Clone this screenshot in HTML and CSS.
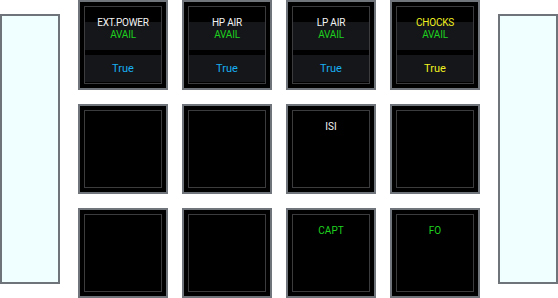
FILE: index.html
```html
<!DOCTYPE html>
<html lang="en">
<head>
    <meta charset="UTF-8">
    <meta name="viewport" content="width=device-width, initial-scale=1.0">
    <title>Ground Services</title>
    <link rel="stylesheet" href="styles.css">
</head>
<body>
    <div class="layout">
        <div class="side-panel"></div>

        <div class="button-grid">
            <div class="svc-btn">
                <div class="svc-inner">
                    <div class="svc-head">
                        <div class="label">EXT.POWER</div>
                        <div class="state">AVAIL</div>
                    </div>
                    <div class="svc-value">True</div>
                </div>
            </div>
            <div class="svc-btn">
                <div class="svc-inner">
                    <div class="svc-head">
                        <div class="label">HP AIR</div>
                        <div class="state">AVAIL</div>
                    </div>
                    <div class="svc-value">True</div>
                </div>
            </div>
            <div class="svc-btn">
                <div class="svc-inner">
                    <div class="svc-head">
                        <div class="label">LP AIR</div>
                        <div class="state">AVAIL</div>
                    </div>
                    <div class="svc-value">True</div>
                </div>
            </div>
            <div class="svc-btn warn">
                <div class="svc-inner">
                    <div class="svc-head">
                        <div class="label">CHOCKS</div>
                        <div class="state">AVAIL</div>
                    </div>
                    <div class="svc-value">True</div>
                </div>
            </div>

            <div class="svc-btn"><div class="svc-inner"></div></div>
            <div class="svc-btn"><div class="svc-inner"></div></div>
            <div class="svc-btn">
                <div class="svc-inner">
                    <div class="plain-label">ISI</div>
                </div>
            </div>
            <div class="svc-btn"><div class="svc-inner"></div></div>

            <div class="svc-btn"><div class="svc-inner"></div></div>
            <div class="svc-btn"><div class="svc-inner"></div></div>
            <div class="svc-btn">
                <div class="svc-inner">
                    <div class="plain-label green">CAPT</div>
                </div>
            </div>
            <div class="svc-btn">
                <div class="svc-inner">
                    <div class="plain-label green">FO</div>
                </div>
            </div>
        </div>

        <div class="side-panel"></div>
    </div>
</body>
</html>
```

FILE: styles.css
```css
body { margin: 0; background: #fff; font-family: Roboto, "Liberation Sans", sans-serif; }
.layout { display: flex; align-items: flex-start; gap: 18px; width: 558px; height: 298px; }
.side-panel { width: 60px; height: 270px; margin-top: 14px; box-sizing: border-box; background: #f0ffff; border: 2px solid #6e7479; }
.button-grid { display: grid; grid-template-columns: repeat(4, 90px); grid-template-rows: repeat(3, 90px); gap: 14px; }
.svc-btn { box-sizing: border-box; width: 90px; height: 90px; padding: 4px; background: #000; border: 2px solid #6f757a; }
.svc-inner { box-sizing: border-box; height: 78px; border: 1px solid #3c3c3e; text-align: center; }
.svc-head { height: 43px; box-sizing: border-box; padding-top: 10px; background: linear-gradient(to bottom, #000 15px, #141619 15px); font-size: 10px; line-height: 12px; letter-spacing: -0.2px; }
.label { color: #f2f2f2; }
.state { color: #1fd21f; }
.svc-value { height: 27px; margin-top: 5px; background: #141619; color: #18aef2; font-size: 11px; line-height: 27px; }
.warn .label, .warn .svc-value { color: #f0f020; }
.plain-label { padding-top: 10px; font-size: 10px; line-height: 12px; color: #f2f2f2; }
.plain-label.green { color: #1fd21f; }
```
